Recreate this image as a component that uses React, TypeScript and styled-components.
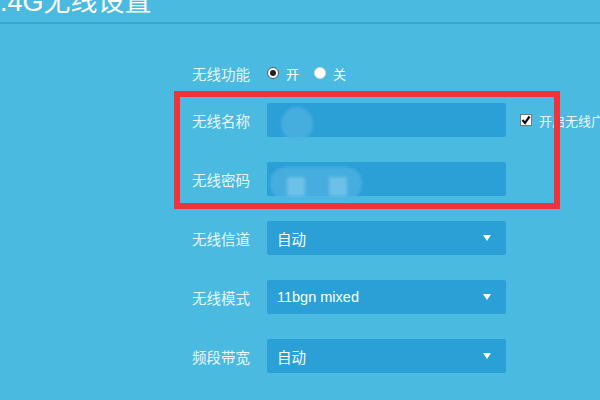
import React from 'react';
import styled, { createGlobalStyle } from 'styled-components';

const GlobalStyle = createGlobalStyle`
  html, body {
    margin: 0;
    padding: 0;
    background: #4bbae0;
    overflow: hidden;
  }
  body {
    font-family: "Liberation Sans", "Noto Sans CJK SC", sans-serif;
  }
`;

const Page = styled.div`
  position: relative;
  width: 600px;
  height: 400px;
  overflow: hidden;
  background: #4bbae0;
  color: #ffffff;
`;

const Header = styled.div`
  height: 22px;
  border-bottom: 2px solid #3aa6cf;
  overflow: hidden;
`;

const Title = styled.h1`
  margin: -14px 0 0 -15px;
  font-size: 27px;
  font-weight: normal;
  line-height: 32px;
  white-space: nowrap;
  color: #ffffff;
`;

const Form = styled.div`
  display: flex;
  flex-direction: column;
  gap: 25px;
  padding: 32px 0 0 192px;
`;

const Row = styled.div<{ $tight?: boolean }>`
  display: flex;
  align-items: center;
  height: 34px;
  margin-bottom: ${(p) => (p.$tight ? '-12px' : '0')};
  white-space: nowrap;
`;

const Label = styled.span`
  width: 75px;
  flex: none;
  font-size: 14.5px;
  color: #eaf7fc;
`;

const Radio = styled.span<{ $checked?: boolean }>`
  display: inline-flex;
  align-items: center;
  justify-content: center;
  width: 12px;
  height: 12px;
  box-sizing: border-box;
  border-radius: 50%;
  background: #ffffff;
  border: 1px solid ${(p) => (p.$checked ? '#555' : '#dde')};
  margin-left: ${(p) => (p.$checked ? '0' : '15px')};

  &::after {
    content: '';
    display: ${(p) => (p.$checked ? 'block' : 'none')};
    width: 6px;
    height: 6px;
    border-radius: 50%;
    background: #222;
  }
`;

const Option = styled.span`
  font-size: 13px;
  margin-left: 7px;
  color: #ffffff;
`;

const Field = styled.div`
  position: relative;
  width: 239px;
  height: 34px;
  flex: none;
  border-radius: 2px;
  background: #2aa0d7;
  display: flex;
  align-items: center;
  justify-content: space-between;
  padding: 0 15px 0 10px;
  box-sizing: border-box;
  font-size: 14.5px;
  color: #ffffff;
`;

const Arrow = styled.span`
  width: 0;
  height: 0;
  border-left: 4.5px solid transparent;
  border-right: 4.5px solid transparent;
  border-top: 6px solid #ffffff;
`;

const Blob = styled.span<{ $l: number; $t: number; $w: number; $h: number; $r: string; $light?: boolean }>`
  position: absolute;
  left: ${(p) => p.$l}px;
  top: ${(p) => p.$t}px;
  width: ${(p) => p.$w}px;
  height: ${(p) => p.$h}px;
  border-radius: ${(p) => p.$r};
  background: ${(p) => (p.$light ? 'rgba(120, 200, 235, 0.75)' : 'rgba(80, 178, 225, 0.75)')};
  filter: blur(1.5px);
`;

const Check = styled.span`
  display: inline-flex;
  align-items: center;
  margin-left: 14px;
  font-size: 13px;
  color: #eaf7fc;
`;

const CheckBox = styled.span`
  display: inline-flex;
  align-items: center;
  justify-content: center;
  width: 12px;
  height: 12px;
  box-sizing: border-box;
  border: 1px solid #777;
  background: #ffffff;
  margin-right: 7px;
`;

const Highlight = styled.div`
  position: absolute;
  left: 174px;
  top: 91px;
  width: 386px;
  height: 118px;
  box-sizing: border-box;
  border: 6px solid #ee3439;
  pointer-events: none;
`;

const selects = [
  { label: '无线信道', value: '自动' },
  { label: '无线模式', value: '11bgn mixed' },
  { label: '频段带宽', value: '自动' },
];

export default function App() {
  return (
    <Page>
      <GlobalStyle />
      <Header>
        <Title>2.4G无线设置</Title>
      </Header>
      <Form>
        <Row $tight>
          <Label>无线功能</Label>
          <Radio $checked />
          <Option>开</Option>
          <Radio />
          <Option>关</Option>
        </Row>
        <Row>
          <Label>无线名称</Label>
          <Field>
            <Blob $l={14} $t={4} $w={32} $h={34} $r="50%" />
          </Field>
          <Check>
            <CheckBox>
              <svg width="10" height="10" viewBox="0 0 10 10">
                <path d="M1.5 5 L4 8 L8.5 1.5" fill="none" stroke="#111" strokeWidth="2.2" />
              </svg>
            </CheckBox>
            开启无线广播
          </Check>
        </Row>
        <Row>
          <Label>无线密码</Label>
          <Field>
            <Blob $l={3} $t={5} $w={92} $h={33} $r="16px" />
            <Blob $l={20} $t={15} $w={18} $h={19} $r="1px" $light />
            <Blob $l={62} $t={15} $w={18} $h={19} $r="1px" $light />
          </Field>
        </Row>
        {selects.map((s) => (
          <Row key={s.label}>
            <Label>{s.label}</Label>
            <Field>
              {s.value}
              <Arrow />
            </Field>
          </Row>
        ))}
      </Form>
      <Highlight />
    </Page>
  );
}
